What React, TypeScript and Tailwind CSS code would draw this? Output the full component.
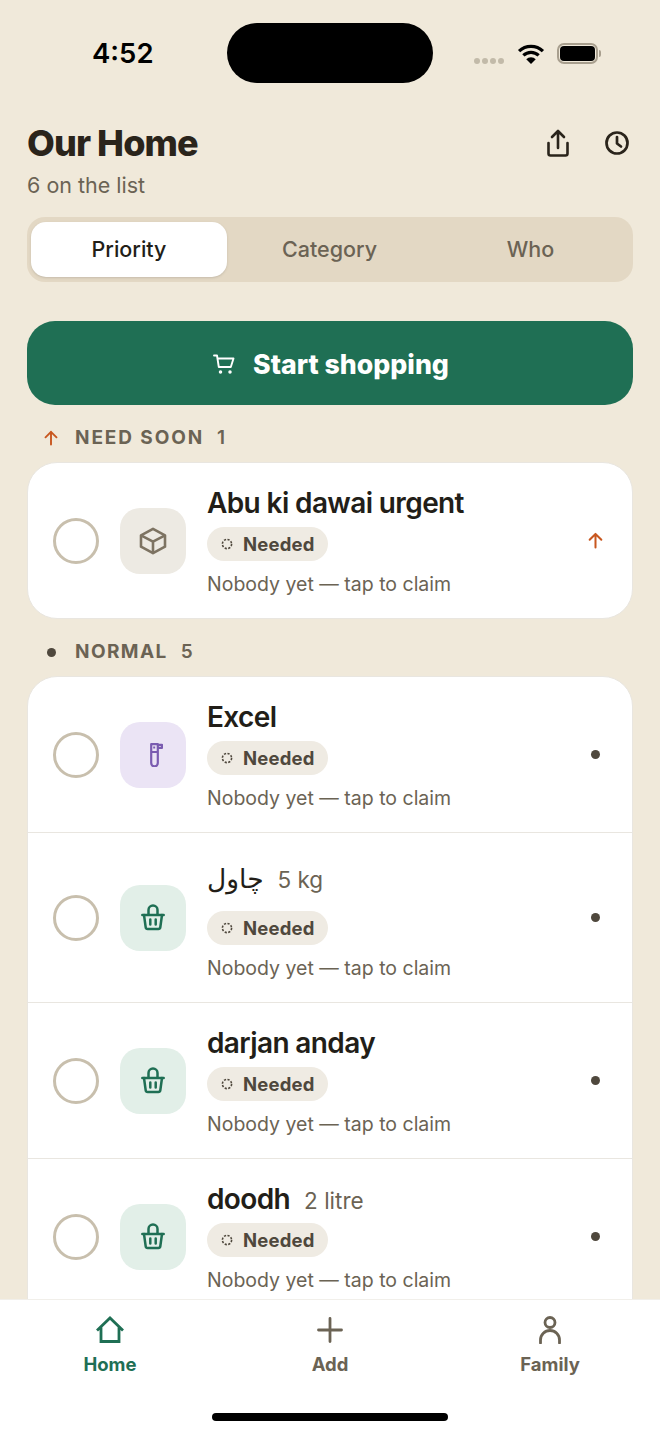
import { ReactNode } from 'react';

const font = { fontFamily: 'Inter, "DejaVu Sans", sans-serif' };

function ArrowUp({ className }: { className?: string }) {
  return (
    <svg viewBox="0 0 16 16" fill="none" stroke="currentColor" strokeWidth="1.900" strokeLinecap="round" strokeLinejoin="round" className={className}>
      <path d="M8 14.500V1.800M2.500 7.300 8 1.800l5.500 5.500" />
    </svg>
  );
}

function BoxIcon() {
  return (
    <svg viewBox="0 0 28 28" fill="none" stroke="currentColor" strokeWidth="2.600" strokeLinejoin="round" className="h-7 w-7 text-[#7d7362]">
      <path d="M14 1.800 26 8.300v11.400l-12 6.500-12-6.500V8.300z" />
      <path d="M2 8.300 14 14.600 26 8.300M14 14.600V26" />
    </svg>
  );
}

function TubeIcon() {
  return (
    <svg viewBox="0 0 13 24" fill="none" stroke="currentColor" strokeWidth="2.200" strokeLinejoin="round" className="ml-[6px] h-[24px] w-[13px] text-[#7a5bb0]">
      <path d="M1.200 1.200h6.600v18.900a3.300 3.300 0 0 1-6.600 0z" />
      <path d="M1.200 9h6.600M7.800 1.800h4.200v3H7.800M3.200 4.500h2" />
    </svg>
  );
}

function BasketIcon() {
  return (
    <svg viewBox="0 0 24 27" fill="none" stroke="currentColor" strokeWidth="2.500" strokeLinecap="round" strokeLinejoin="round" className="h-[27px] w-6 text-[#1f6f54]">
      <path d="M7.500 10.500V6a4.500 4.500 0 0 1 9 0v4.500" />
      <path d="M1.300 11h21.400" />
      <path d="M3 11 4.700 23.300a2 2 0 0 0 2 1.700h10.600a2 2 0 0 0 2-1.700L21 11" />
      <path d="M9.300 15.500v5M14.700 15.500v5" />
    </svg>
  );
}

function Dashed() {
  return (
    <svg viewBox="0 0 12 12" fill="none" stroke="#4f483d" strokeWidth="1.600" strokeDasharray="2.200 1.400" className="h-3 w-3">
      <circle cx="6" cy="6" r="4.600" />
    </svg>
  );
}

type RowProps = {
  title: ReactNode;
  qty?: string;
  iconBg: string;
  icon: ReactNode;
  marker: ReactNode;
  first?: boolean;
  titleClass?: string;
  nameClass?: string;
};

function Row({ title, qty, iconBg, icon, marker, first, titleClass, nameClass }: RowProps) {
  return (
    <div className={`flex items-center pl-[25px] pr-[28px] ${first ? '' : 'border-t border-[#e9e6e0]'}`}>
      <div className="h-[46px] w-[46px] shrink-0 rounded-full border-[3px] border-[#c8bfad]" />
      <div className={`ml-[21px] flex h-[66px] w-[66px] shrink-0 items-center justify-center rounded-[20px] ${iconBg}`}>{icon}</div>
      <div className="ml-[21px] flex-1 pt-[20px] pb-[22px]">
        <div className={`flex items-baseline gap-[14px] ${titleClass ?? 'h-[40px]'}`}>
          <span className={`leading-[40px] text-[#221e18] ${nameClass ?? 'text-[28px] font-semibold tracking-[-0.022em]'}`}>{title}</span>
          {qty && <span className="text-[22.500px] leading-[40px] text-[#6b6354]">{qty}</span>}
        </div>
        <div className="mt-[4px] flex h-[34px] w-[121px] items-center gap-[10px] rounded-full bg-[#efebe3] pl-[14px]">
          <Dashed />
          <span className="text-[18.500px] leading-none font-bold tracking-[0.01em] text-[#4f483d]">Needed</span>
        </div>
        <p className="mt-[11px] text-[19.500px] leading-[24px] text-[#6b6354]">Nobody yet — tap to claim</p>
      </div>
      {marker}
    </div>
  );
}

const dot = <div className="mr-[4px] h-[9px] w-[9px] rounded-full bg-[#4f483d]" />;

function SectionHead({ icon, label, count, spacing }: { icon: ReactNode; label: string; count: number; spacing: string }) {
  return (
    <div className="flex h-[26px] items-center pt-[2px] pl-[16px] text-[19px] font-bold text-[#6b6354]">
      <div className="flex w-[16px] justify-center">{icon}</div>
      <span className={`ml-[16px] ${spacing}`}>{label}</span>
      <span className="ml-[13px] font-semibold">{count}</span>
    </div>
  );
}

export default function App() {
  return (
    <div className="flex h-[1435px] w-[660px] flex-col overflow-hidden bg-[#f0e9da]" style={font}>
      <div className="flex-1 overflow-hidden">
        {/* Status bar */}
        <div className="relative h-[121px]">
          <span className="absolute left-[92px] top-[35px] text-[27.500px] leading-[36px] font-semibold text-black">4:52</span>
          <div className="absolute left-[227px] top-[23px] h-[60px] w-[206px] rounded-full bg-black" />
          <div className="absolute left-[474px] top-[58px] flex gap-[2.500px]">
            <i className="h-[5.500px] w-[5.500px] rounded-full bg-[#c2baa9]" />
            <i className="h-[5.500px] w-[5.500px] rounded-full bg-[#c2baa9]" />
            <i className="h-[5.500px] w-[5.500px] rounded-full bg-[#c2baa9]" />
            <i className="h-[5.500px] w-[5.500px] rounded-full bg-[#c2baa9]" />
          </div>
          <svg viewBox="0 0 28 22" className="absolute left-[517px] top-[43px] h-[21px] w-[28px]" fill="none" stroke="black" strokeWidth="3.400">
            <path d="M1.500 8.500a18 18 0 0 1 25 0M6 13a11.600 11.600 0 0 1 16 0" />
            <path d="M14 22l-5-5a7 7 0 0 1 10 0z" fill="black" stroke="none" />
          </svg>
          <div className="absolute left-[557px] top-[43px] flex h-[21px] w-[41px] items-center justify-center rounded-[7px] border-2 border-[#a89f8e]">
            <div className="h-[15px] w-[35px] rounded-[4px] bg-black" />
          </div>
          <div className="absolute left-[599px] top-[50px] h-[7px] w-[2px] rounded-r-full bg-[#a89f8e]" />
        </div>

        {/* Header */}
        <div className="flex items-start justify-between pl-[27px] pr-[31px]">
          <div>
            <h1 className="text-[36px] leading-[44px] font-extrabold tracking-[-0.025em] text-[#2a241b]">Our Home</h1>
            <p className="mt-[7px] text-[21.500px] leading-[26px] text-[#6b6354]">6 on the list</p>
          </div>
          <div className="mt-[7px] flex items-center gap-[35px] text-[#2a241b]">
            <svg viewBox="0 0 24 30" fill="none" stroke="currentColor" strokeWidth="2.600" strokeLinecap="round" strokeLinejoin="round" className="h-[30px] w-[24px]">
              <path d="M12 20V3M6 9l6-6 6 6" />
              <path d="M2.500 15v10.500a2 2 0 0 0 2 2h15a2 2 0 0 0 2-2V15" />
            </svg>
            <svg viewBox="0 0 24 24" fill="none" stroke="currentColor" strokeWidth="2.700" strokeLinecap="round" strokeLinejoin="round" className="h-6 w-6">
              <circle cx="12" cy="12" r="10.500" />
              <path d="M12 6v6.500l4 3" />
            </svg>
          </div>
        </div>

        {/* Tabs */}
        <div className="mx-[27px] mt-[19px] flex h-[65px] w-[606px] items-center rounded-[18px] bg-[#e3d8c4] px-[4px] text-[21.500px] font-medium text-[#6b6354]">
          <div className="flex h-[55px] w-[196px] items-center justify-center rounded-[15px] bg-white font-[550] text-[#221e18] shadow-sm">Priority</div>
          <div className="flex w-[205px] justify-center">Category</div>
          <div className="flex w-[197px] justify-center">Who</div>
        </div>

        {/* Start shopping */}
        <button type="button" className="mx-[27px] mt-[39px] flex h-[84px] w-[606px] items-center justify-center gap-[18px] rounded-[28px] bg-[#1f6f54] pt-[2px] pl-[2px] text-[26.700px] font-extrabold text-white">
          <svg viewBox="0 0 22 20" fill="none" stroke="currentColor" strokeWidth="1.900" strokeLinecap="round" strokeLinejoin="round" className="h-[20px] w-[22px]">
            <path d="M1 1.500h3l1.800 11.500h12L20.500 4.500H4.500" />
            <circle cx="7.500" cy="18" r="0.800" />
            <circle cx="17" cy="18" r="0.800" />
          </svg>
          Start shopping
        </button>

        {/* Need soon */}
        <div className="mx-[27px] mt-[19px]">
          <SectionHead icon={<ArrowUp className="h-[16px] w-[16px] text-[#c8571f]" />} label="NEED SOON" count={1} spacing="tracking-[0.1em]" />
          <div className="mt-[12px] overflow-hidden rounded-[30px] border border-[#e9e6e0] bg-white">
            <Row
              first
              title="Abu ki dawai urgent"
              iconBg="bg-[#edeae3]"
              icon={<BoxIcon />}
              marker={<ArrowUp className="h-[17px] w-[17px] text-[#c8571f]" />}
            />
          </div>
        </div>

        {/* Normal */}
        <div className="mx-[27px] mt-[19px]">
          <SectionHead icon={<div className="h-[9px] w-[9px] rounded-full bg-[#4f483d]" />} label="NORMAL" count={5} spacing="tracking-[0.075em]" />
          <div className="mt-[12px] overflow-hidden rounded-[30px] border border-[#e9e6e0] bg-white pb-[40px]">
            <Row first title="Excel" iconBg="bg-[#ebe4f5]" icon={<TubeIcon />} marker={dot} />
            <Row title="چاول" qty="5 kg" titleClass="h-[54px] pt-[5px]" nameClass="text-[26.500px]" iconBg="bg-[#e2efe8]" icon={<BasketIcon />} marker={dot} />
            <Row title="darjan anday" iconBg="bg-[#e2efe8]" icon={<BasketIcon />} marker={dot} />
            <Row title="doodh" qty="2 litre" iconBg="bg-[#e2efe8]" icon={<BasketIcon />} marker={dot} />
          </div>
        </div>
      </div>

      {/* Bottom nav */}
      <div className="relative h-[136px] shrink-0 border-t border-[#f1efea] bg-white">
        <div className="grid grid-cols-3 pt-[16px] text-[18.500px] font-bold text-[#6b6354]">
          <div className="flex flex-col items-center text-[#1f6f54]">
            <svg viewBox="0 0 28 28" fill="none" stroke="currentColor" strokeWidth="2.800" strokeLinejoin="miter" className="h-7 w-7">
              <path d="M1 14.500 14 2l13 12.500M5 11.500V25.500h18V11.500" />
            </svg>
            <span className="mt-[9px] leading-[22px]">Home</span>
          </div>
          <div className="flex flex-col items-center">
            <svg viewBox="0 0 28 28" fill="none" stroke="currentColor" strokeWidth="2.800" strokeLinecap="round" className="h-7 w-7">
              <path d="M14 2.500v23M2.500 14h23" />
            </svg>
            <span className="mt-[9px] leading-[22px]">Add</span>
          </div>
          <div className="flex flex-col items-center">
            <svg viewBox="0 0 28 28" fill="none" stroke="currentColor" strokeWidth="2.800" strokeLinecap="round" className="h-7 w-7">
              <circle cx="14" cy="6.500" r="5" />
              <path d="M4.500 27v-3a9.500 9.500 0 0 1 19 0v3" />
            </svg>
            <span className="mt-[9px] leading-[22px]">Family</span>
          </div>
        </div>
        <div className="absolute bottom-[14px] left-[212px] h-[8px] w-[236px] rounded-full bg-black" />
      </div>
    </div>
  );
}
